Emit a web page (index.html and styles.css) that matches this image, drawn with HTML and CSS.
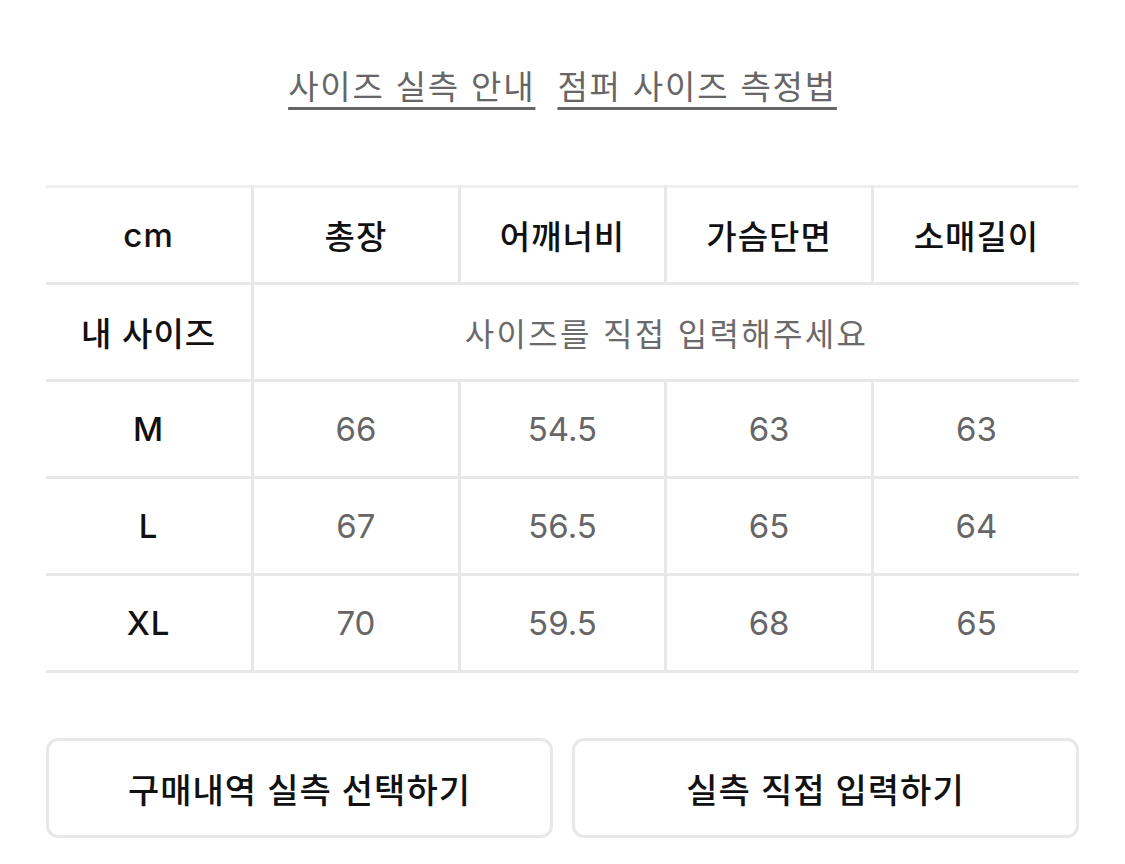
FILE: index.html
```html
<!DOCTYPE html>
<html lang="ko">
<head>
<meta charset="utf-8">
<title>사이즈 실측</title>
<link rel="stylesheet" href="styles.css">
</head>
<body>
<div class="page">
  <nav class="links">
    <a class="link" href="#">사이즈 실측 안내</a>
    <a class="link" href="#">점퍼 사이즈 측정법</a>
  </nav>

  <table class="size-table">
    <thead>
      <tr>
        <th class="label">cm</th>
        <th>총장</th>
        <th>어깨너비</th>
        <th>가슴단면</th>
        <th>소매길이</th>
      </tr>
    </thead>
    <tbody>
      <tr>
        <th class="label">내 사이즈</th>
        <td class="hint" colspan="4">사이즈를 직접 입력해주세요</td>
      </tr>
      <tr>
        <th class="label">M</th>
        <td>66</td><td>54.5</td><td>63</td><td>63</td>
      </tr>
      <tr>
        <th class="label">L</th>
        <td>67</td><td>56.5</td><td>65</td><td>64</td>
      </tr>
      <tr>
        <th class="label">XL</th>
        <td>70</td><td>59.5</td><td>68</td><td>65</td>
      </tr>
    </tbody>
  </table>

  <div class="actions">
    <button class="btn" type="button">구매내역 실측 선택하기</button>
    <button class="btn" type="button">실측 직접 입력하기</button>
  </div>
</div>
</body>
</html>
```

FILE: styles.css
```css
* { box-sizing: border-box; }

html, body {
  margin: 0;
  background: #ffffff;
}

body {
  font-family: "Inter", "Noto Sans CJK KR", sans-serif;
  color: #111111;
}

.page {
  padding: 67px 46px 0;
}

.links {
  display: flex;
  justify-content: center;
  gap: 22px;
  line-height: 40px;
}

.link {
  font-size: 33px;
  color: #666666;
  text-decoration: underline;
  text-decoration-thickness: 2.5px;
  text-underline-offset: 8px;
  letter-spacing: 1.8px;
}

.size-table {
  width: 100%;
  margin-top: 78px;
  border-collapse: collapse;
  table-layout: fixed;
  border-top: 3px solid #efefef;
}

.size-table th,
.size-table td {
  height: 97px;
  padding: 0;
  text-align: center;
  vertical-align: middle;
  font-size: 33px;
  border-bottom: 3px solid #e8e8e8;
  border-left: 3px solid #e8e8e8;
}

.size-table th:first-child {
  border-left: none;
}

.size-table th {
  font-weight: 500;
  color: #111111;
  letter-spacing: 1px;
}

.size-table td {
  color: #666666;
  font-weight: 400;
}

.size-table .hint {
  font-size: 32px;
  color: #6a6a6a;
  letter-spacing: 2.3px;
}

.actions {
  display: flex;
  gap: 19px;
  margin-top: 65px;
}

.btn {
  flex: 1;
  height: 100px;
  background: #ffffff;
  border: 3px solid #e8e8e8;
  border-radius: 12px;
  font-family: "Inter", "Noto Sans CJK KR", sans-serif;
  font-size: 34px;
  font-weight: 500;
  letter-spacing: 1px;
  color: #111111;
}
```
